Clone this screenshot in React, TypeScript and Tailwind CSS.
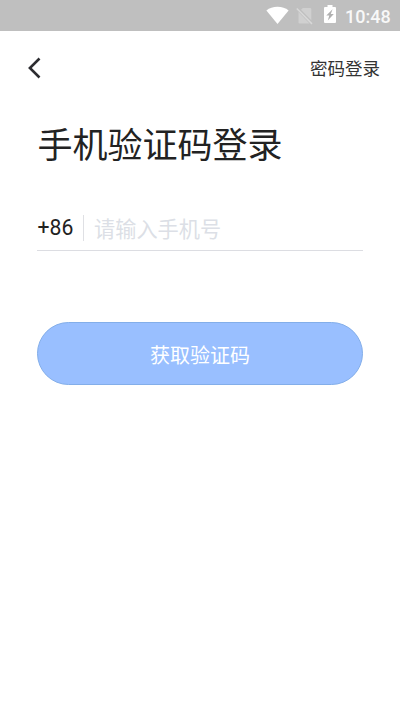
import React from 'react';

function StatusBar() {
  return (
    <div className="flex h-[31px] items-start bg-[#bfbfbf] pl-[266px] text-white">
      <svg className="mt-[6px] h-[18px] w-[23px]" viewBox="0 0 23 18" fill="currentColor">
        <path d="M0.4 4.4C3.4 2 7.2.7 11.5.7S19.600 2 22.600 4.400L11.500 18Z" />
      </svg>
      <svg className="ml-[7px] mt-[7px] h-[18px] w-[17px]" viewBox="0 0 17 18">
        <path d="M5 2.700L6.800 1H14.200Q15.300 1 15.300 2.200V13.200Z" fill="#d0d0d0" />
        <path d="M2.500 5L13.500 16.500H3.800Q2.500 16.500 2.500 15.300Z" fill="#d0d0d0" />
        <path d="M.8 1.500L16 16.900" stroke="#d8d8d8" strokeWidth="1.500" />
      </svg>
      <svg className="ml-[11px] mt-[5px] h-[18px] w-[12px]" viewBox="0 0 12 18">
        <path d="M1 2H3.500V0H8.500V2H11Q12 2 12 3V17Q12 18 11 18H1Q0 18 0 17V3Q0 2 1 2Z" fill="currentColor" />
        <path d="M8.600 4.300L2.300 10.600H5.300L3.800 15.600L9.800 9H6.800Z" fill="#b0b0b0" />
      </svg>
      <span className="ml-[9px] mt-[4px] text-[18px] leading-[26px] font-medium text-[#f8f8f8]">10:48</span>
    </div>
  );
}

export default function App() {
  return (
    <div className="h-[711px] w-[400px] overflow-hidden bg-white font-[Roboto,'Noto_Sans_CJK_SC',sans-serif] text-[#222222]">
      <StatusBar />
      <header className="flex h-[74px] items-center justify-between pr-[20px] pl-[27px]">
        <button aria-label="返回">
          <svg className="h-[22px] w-[14px]" viewBox="0 0 14 22" fill="none" stroke="#2c2c30" strokeWidth="2.600">
            <path d="M12.500 1.500L2.900 11L12.500 20.500" />
          </svg>
        </button>
        <button className="pt-px text-[17.5px] leading-[26px] text-[#333333]">密码登录</button>
      </header>
      <main className="px-[37px]">
        <h1 className="mt-[16px] pl-[0.5px] text-[35px] leading-[52px]">手机验证码登录</h1>
        <div className="mt-[33px] flex h-[45px] items-center border-b border-[#dcdde2]">
          <span className="w-[46px] pl-[0.5px] text-[21.2px] leading-[30px]">+86</span>
          <span className="h-[26px] w-px bg-[#dfe0e4]" />
          <span className="ml-[10px] pt-[3px] text-[21.2px] leading-[30px] text-[#dcdfe6]">请输入手机号</span>
        </div>
        <button className="mt-[71px] flex h-[63px] w-[326px] items-center justify-center rounded-full border border-[#83aee9] bg-[#99bfff] pt-[4px] text-[20px] text-white">
          获取验证码
        </button>
      </main>
    </div>
  );
}
